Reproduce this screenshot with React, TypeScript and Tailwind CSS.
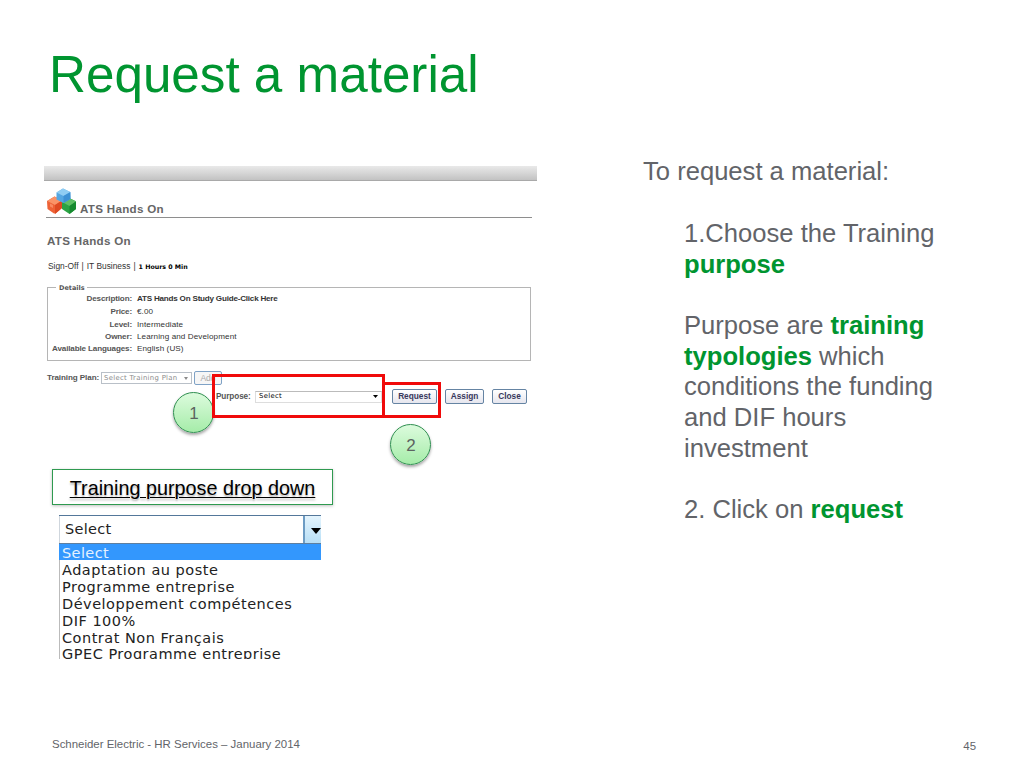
import type { ReactNode } from "react"

const details = [
  { label: "Description:", value: "ATS Hands On Study Guide-Click Here", row: "h-[13px]", valueClass: "font-bold tracking-[-0.22px]" },
  { label: "Price:", value: "€.00", row: "h-[14px]", valueClass: "tracking-[0.1px]" },
  { label: "Level:", value: "Intermediate", row: "h-[12px]", valueClass: "tracking-[0.1px]" },
  { label: "Owner:", value: "Learning and Development", row: "h-[12px]", valueClass: "tracking-[0.1px]" },
  { label: "Available Languages:", value: "English (US)", row: "h-[12px]", valueClass: "tracking-[0.1px]" },
]

const purposes = [
  "Adaptation au poste",
  "Programme entreprise",
  "Développement compétences",
  "DIF 100%",
  "Contrat Non Français",
  "GPEC Programme entreprise",
]

function CubesLogo() {
  return (
    <svg width="30" height="28" viewBox="0 0 30 28" className="shrink-0">
      <path d="M7.5 8.5 14 11.5 15 13v7L8.5 25.5 7 25.5 0.5 21 0 13z" fill="#ee6236" />
      <path d="M7.5 8.5 15 12.5 8 17 0.3 13z" fill="#fa9468" />
      <path d="M8 17 15 12.5v7.5L8 26z" fill="#de4a22" />
      <path d="M3 15.5 6 17v3l-3-1.5z" fill="#f88a62" />
      <path d="M22 10 28.5 13 29 14v7L22.5 26 15 21v-7z" fill="#2ba344" />
      <path d="M22 10 29 13.5l-6.5 4.5L15 14z" fill="#5fbf66" />
      <path d="M22.5 18 29 13.5V21l-6.5 5z" fill="#178a30" />
      <path d="M16 0.5 23 4l0.5 7L16.5 15 9.5 11.5V4.5z" fill="#55a7e2" />
      <path d="M16 0.5 23.5 4l-7 4-7-3.5z" fill="#8fcdf3" />
      <path d="M16.5 8l7-4v7l-7 4z" fill="#3d91d4" />
    </svg>
  )
}

function Arrow({ className }: { className: string }) {
  return (
    <svg viewBox="0 0 10 5" className={className} preserveAspectRatio="none">
      <path d="M0 0h10L5 5z" fill="currentColor" />
    </svg>
  )
}

function FormButton({ children, className }: { children: ReactNode; className: string }) {
  return (
    <button
      className={`flex items-center justify-center rounded-[2px] border border-[#6584a3] bg-linear-to-b from-white to-[#e6e6ee] text-[8.3px] leading-none font-bold text-[#38385c] ${className}`}
    >
      {children}
    </button>
  )
}

function Step({ children, className }: { children: ReactNode; className: string }) {
  return (
    <div
      className={`absolute flex size-[41px] items-center justify-center rounded-full border border-[#2f8f50] bg-linear-to-b from-[#dcfbdd] to-[#a5eca9] pt-[2px] pl-px text-[17px] leading-none text-[#5c6360] shadow-[0_2px_3px_rgba(0,0,0,0.35)] ${className}`}
    >
      {children}
    </div>
  )
}

function Key({ children }: { children: ReactNode }) {
  return <strong className="font-bold text-[#009530]">{children}</strong>
}

function MaterialPanel() {
  return (
    <section className="relative h-[303px] w-[493px] text-[#333]">
      <div className="h-[15px] border-b border-[#a9a9a9] bg-linear-to-b from-[#e9e9e9] via-[#d6d6d6] to-[#c2c2c2]" />
      <div className="ml-[2px] flex h-[37px] w-[486px] border-b border-[#8e8e8e] pt-[7px] pl-px">
        <CubesLogo />
        <h2 className="mt-[14px] ml-[3px] text-[11.6px] leading-[14px] font-bold tracking-[0.3px] text-[#666]">
          ATS Hands On
        </h2>
      </div>
      <h3 className="mt-[16px] ml-[3px] text-[11.6px] leading-[14px] font-bold tracking-[0.3px] text-[#666]">
        ATS Hands On
      </h3>
      <div className="mt-[13px] ml-[4px] flex h-[10px] items-baseline gap-[3px] text-[8.4px] leading-[10px] whitespace-nowrap">
        <span>Sign-Off</span>
        <span>|</span>
        <span>IT Business</span>
        <span>|</span>
        <b className="font-['DejaVu_Sans',sans-serif] text-[6.3px] text-black">1 Hours 0 Min</b>
      </div>

      <div className="mt-[16px] ml-[3px] h-[74px] w-[484px] border border-[#b5b5b5]">
        <div className="-mt-[4px] ml-[8px] h-[8px] w-[31px] bg-white pl-[3px] font-['DejaVu_Sans',sans-serif] text-[6.5px] leading-[9px] font-bold text-[#555]">
          Details
        </div>
        {details.map((item) => (
          <div key={item.label} className={`flex items-center gap-[5px] text-[8.1px] leading-[10px] whitespace-nowrap ${item.row}`}>
            <span className="w-[84px] text-right font-bold tracking-[-0.15px] text-[#555]">{item.label}</span>
            <span className={item.valueClass}>{item.value}</span>
          </div>
        ))}
      </div>

      <div className="mt-[10px] ml-[3px] flex h-[14px] items-center text-[8.1px] leading-none font-bold whitespace-nowrap text-[#555]">
        <span className="w-[54px] tracking-[-0.1px]">Training Plan:</span>
        <div className="flex h-[12px] w-[91px] items-center justify-between border border-[#b9c0c8] px-[2px] font-['DejaVu_Sans',sans-serif] text-[6.9px] font-normal tracking-[0.3px] text-[#8b8b8b]">
          Select Training Plan
          <Arrow className="mr-[1px] h-[3px] w-[4px]" />
        </div>
        <button className="ml-[2px] flex h-[14px] w-[28px] items-center justify-center rounded-[2px] border border-[#7fa2c6] bg-[#f6f6f6] text-[8.5px] font-normal text-[#a9a9a9]">
          Add
        </button>
      </div>
      <div className="mt-[4px] ml-[172px] flex h-[15px] items-center text-[8.2px] leading-none whitespace-nowrap">
        <span className="w-[39px] pt-px font-bold tracking-[-0.1px] text-[#555]">Purpose:</span>
        <div className="flex h-[12px] w-[127px] items-center justify-between border border-[#ddd] border-t-[#bbb] px-[3px] font-['DejaVu_Sans',sans-serif] text-[6.9px] tracking-[0.3px] text-black">
          Select
          <Arrow className="h-[3px] w-[5px]" />
        </div>
        <FormButton className="ml-[10px] h-[15px] w-[45px]">Request</FormButton>
        <FormButton className="ml-[8px] h-[15px] w-[39px]">Assign</FormButton>
        <FormButton className="ml-[8px] h-[15px] w-[35px]">Close</FormButton>
      </div>

      {/* callouts over the form */}
      <Step className="top-[226px] left-[129px]">1</Step>
      <Step className="top-[258px] left-[346px]">2</Step>
      <div className="absolute top-[208px] left-[168px] h-[44px] w-[173px] border-3 border-[#f00a0a]" />
      <div className="absolute top-[216px] left-[338px] h-[36px] w-[59px] border-3 border-[#f00a0a]" />
    </section>
  )
}

function PurposeList() {
  return (
    <div className="mt-[10px] ml-[15px] h-[144px] w-[262px] overflow-hidden font-['DejaVu_Sans',sans-serif] text-[14.5px] text-[#222]">
      <div className="flex h-[28px] border-t border-[#54779a]">
        <div className="flex flex-1 items-center border-l border-[#cfd6dd] pl-[5px] tracking-[0.3px]">Select</div>
        <div className="flex w-[18px] items-center border-l-2 border-[#6d9cc4] bg-linear-to-b from-[#e4f4fd] to-[#b8dff6] pt-[3px] pl-[6px] text-black">
          <Arrow className="h-[6px] w-[10px] shrink-0" />
        </div>
      </div>
      <div className="h-[17px] border-t border-[#5f7f9f] bg-[#3397fd] pl-[3px] leading-[18px] tracking-[0.4px] text-[#e5f2ff]">
        Select
      </div>
      <ul className="border-l border-[#bbb] pt-px pl-[2px]">
        {purposes.map((purpose) => (
          <li key={purpose} className="h-[16.9px] leading-[18px] tracking-[0.5px] whitespace-nowrap">
            {purpose}
          </li>
        ))}
      </ul>
    </div>
  )
}

export default function App() {
  return (
    <main className="flex h-[768px] w-[1024px] flex-col overflow-hidden bg-white font-['Liberation_Sans',Arial,sans-serif]">
      <h1 className="h-[166px] pt-[45px] pl-[49px] text-[51.2px] leading-[60px] text-[#009530]">
        Request a material
      </h1>

      <div className="flex h-[570px] pl-[44px]">
        <div className="w-[493px]">
          <MaterialPanel />
          <div className="ml-[8px] flex h-[36px] w-[281px] items-center justify-center border border-[#2f9a50] bg-white pt-[3px] text-[19.8px] leading-none text-black shadow-[0_1px_3px_rgba(0,0,0,0.25)]">
            <span className="underline decoration-1 underline-offset-2 text-shadow-[0_2px_2px_rgba(0,0,0,0.3)]">
              Training purpose drop down
            </span>
          </div>
          <PurposeList />
        </div>

        <div className="-mt-[9.6px] ml-[106px] w-[310px] text-[25.6px] leading-[30.72px] text-[#626469]">
          <p>To request a material:</p>
          <div className="mt-[30.72px] ml-[41px] flex flex-col gap-[30.72px]">
            <p>
              1.Choose the Training
              <br />
              <Key>purpose</Key>
            </p>
            <p>
              Purpose are <Key>training</Key>
              <br />
              <Key>typologies</Key> which
              <br />
              conditions the funding
              <br />
              and DIF hours
              <br />
              investment
            </p>
            <p>
              2. Click on <Key>request</Key>
            </p>
          </div>
        </div>
      </div>

      <footer className="flex justify-between pr-[48px] pl-[52px] text-[#626469]">
        <span className="text-[11.45px] leading-[16px]">Schneider Electric - HR Services – January 2014</span>
        <span className="mt-[2px] text-[11.45px] leading-[16px]">45</span>
      </footer>
    </main>
  )
}
